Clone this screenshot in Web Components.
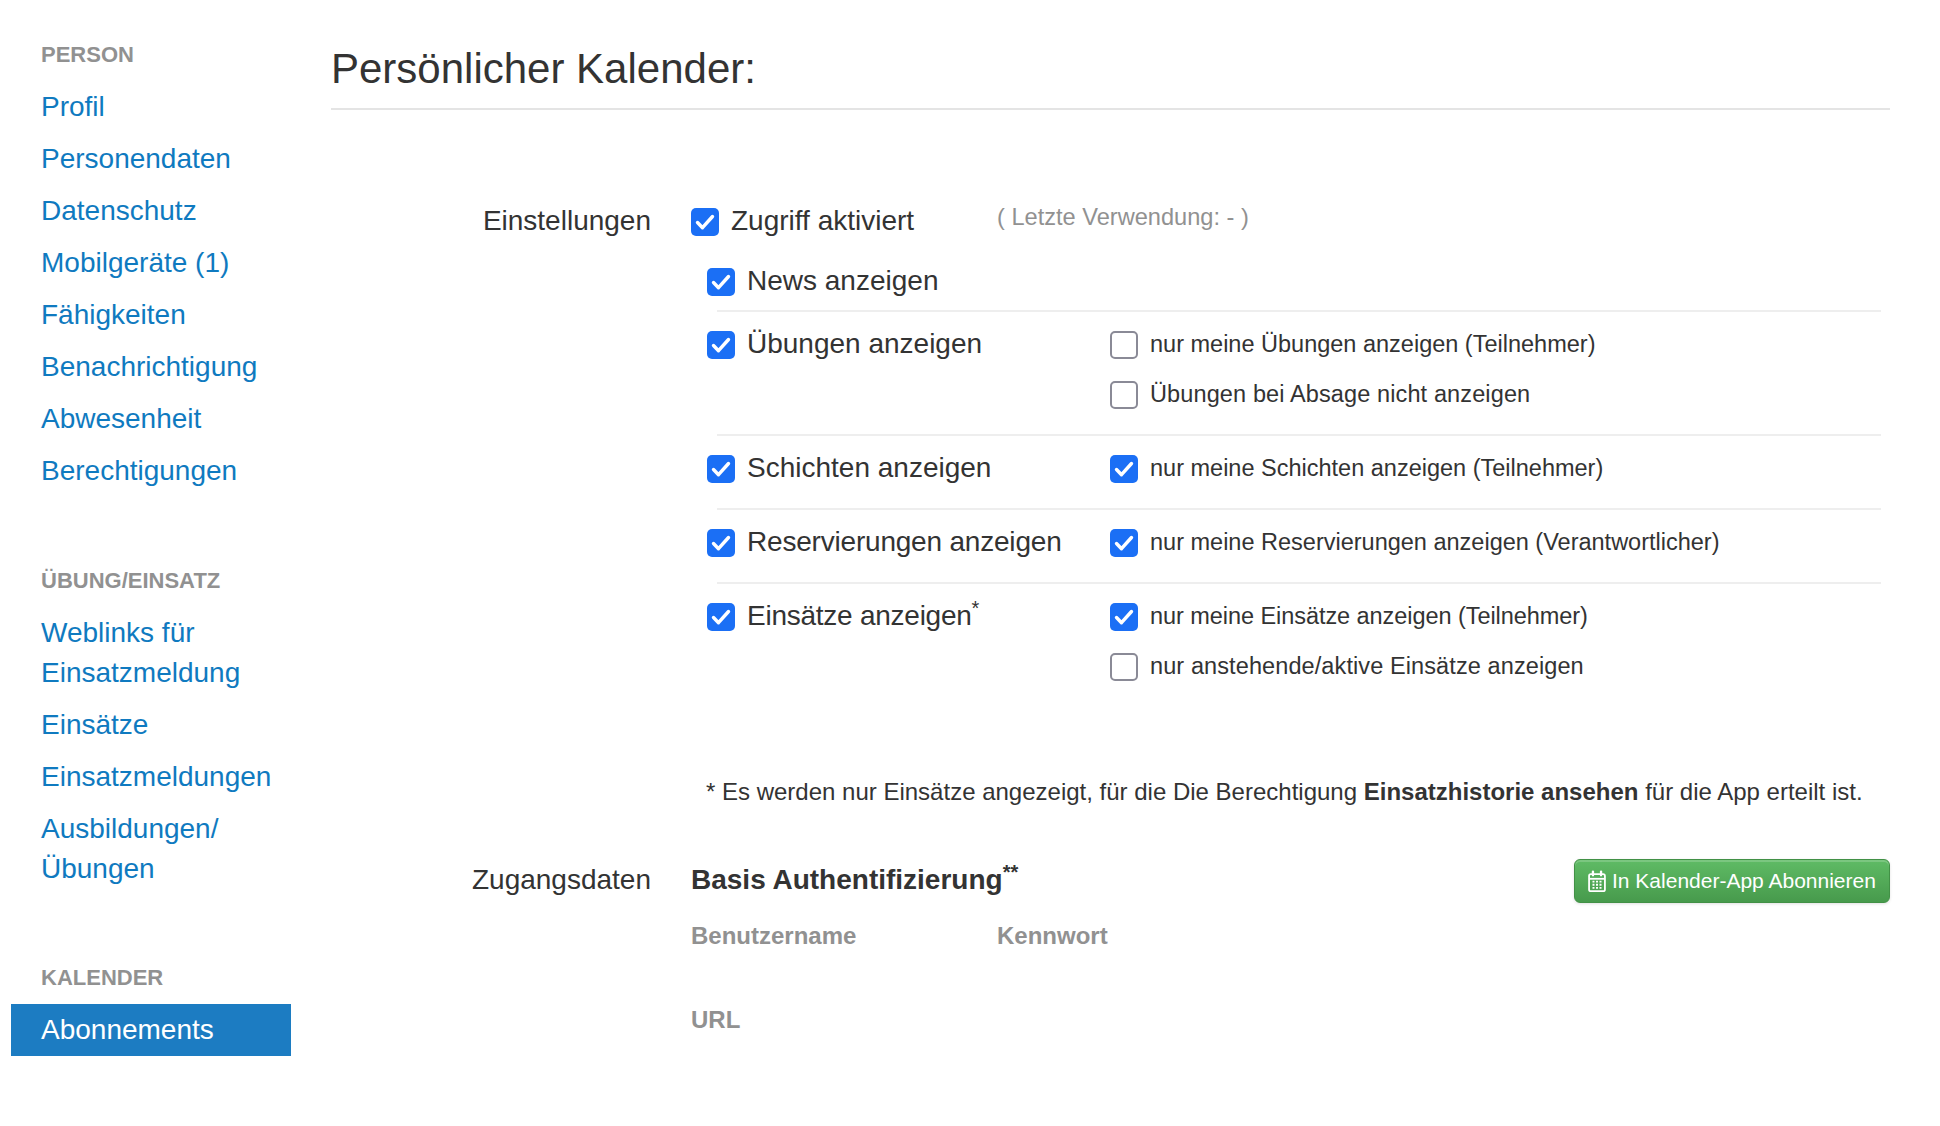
<!DOCTYPE html>
<html lang="de">
<head>
<meta charset="utf-8">
<title>Persönlicher Kalender</title>
<style>
    html, body{
        background: white;
        color: #333;
        font-family: "Liberation Sans", Arial, sans-serif;
        font-size: 28px;
        margin: 0;
    }
    sup{
        font-size: 20px;
        line-height: 0;
    }
</style>
</head>
<body>

<account-page>
    <nav-group slot="nav" title="PERSON">
        <nav-link>Profil</nav-link>
        <nav-link>Personendaten</nav-link>
        <nav-link>Datenschutz</nav-link>
        <nav-link>Mobilgeräte (1)</nav-link>
        <nav-link>Fähigkeiten</nav-link>
        <nav-link>Benachrichtigung</nav-link>
        <nav-link>Abwesenheit</nav-link>
        <nav-link>Berechtigungen</nav-link>
    </nav-group>
    <nav-group slot="nav" title="ÜBUNG/EINSATZ">
        <nav-link>Weblinks für Einsatzmeldung</nav-link>
        <nav-link>Einsätze</nav-link>
        <nav-link>Einsatzmeldungen</nav-link>
        <nav-link>Ausbildungen/ Übungen</nav-link>
    </nav-group>
    <nav-group slot="nav" title="KALENDER">
        <nav-link active>Abonnements</nav-link>
    </nav-group>

    <page-title>Persönlicher Kalender:</page-title>

    <form-row label="Einstellungen" class="settings">
        <access-line>
            <check-item checked>Zugriff aktiviert</check-item>
            <span slot="hint">( Letzte Verwendung: - )</span>
        </access-line>
        <option-row compact>
            <check-item checked>News anzeigen</check-item>
        </option-row>
        <option-row>
            <check-item checked>Übungen anzeigen</check-item>
            <check-item slot="options" small>nur meine Übungen anzeigen (Teilnehmer)</check-item>
            <check-item slot="options" small style="letter-spacing:.12px">Übungen bei Absage nicht anzeigen</check-item>
        </option-row>
        <option-row>
            <check-item checked>Schichten anzeigen</check-item>
            <check-item slot="options" small checked>nur meine Schichten anzeigen (Teilnehmer)</check-item>
        </option-row>
        <option-row>
            <check-item checked style="letter-spacing:-.2px">Reservierungen anzeigen</check-item>
            <check-item slot="options" small checked>nur meine Reservierungen anzeigen (Verantwortlicher)</check-item>
        </option-row>
        <option-row>
            <check-item checked style="letter-spacing:-.25px">Einsätze anzeigen<sup>*</sup></check-item>
            <check-item slot="options" small checked style="letter-spacing:-.06px">nur meine Einsätze anzeigen (Teilnehmer)</check-item>
            <check-item slot="options" small style="letter-spacing:.1px">nur anstehende/aktive Einsätze anzeigen</check-item>
        </option-row>
        <foot-note>* Es werden nur Einsätze angezeigt, für die Die Berechtigung <b>Einsatzhistorie ansehen</b> für die App erteilt ist.</foot-note>
    </form-row>

    <form-row label="Zugangsdaten">
        <access-data>
            <span slot="heading">Basis Authentifizierung<sup>**</sup></span>
            <cal-button slot="action">In Kalender-App Abonnieren</cal-button>
        </access-data>
    </form-row>
</account-page>

<script>
function makeTemplate(html){
    const t = document.createElement("template")
    t.innerHTML = html
    return t
}

class ShadowBase extends HTMLElement {
    constructor(){
        super()
        const shadow = this.attachShadow({ mode: "open" })
        shadow.append(this.constructor.template.content.cloneNode(true))
    }
}

class AccountPage extends ShadowBase {
    static template = makeTemplate(`
        <style>
            :host{ display: flex; min-height: 1126px; }
            aside{ flex: none; margin-left: 11px; padding-top: 40px; width: 280px; }
            main{ flex: 1; margin: 0 50px 0 40px; min-width: 0; }
        </style>
        <aside><slot name="nav"></slot></aside>
        <main><slot></slot></main>`)
}

class NavGroup extends ShadowBase {
    static template = makeTemplate(`
        <style>
            :host{ display: block; margin-bottom: 68.5px; }
            h4{
                color: #919191;
                font-size: 22px;
                font-weight: bold;
                line-height: 30px;
                margin: 0 0 11px;
                padding-left: 30px;
            }
        </style>
        <h4></h4>
        <slot></slot>`)
    connectedCallback(){
        this.shadowRoot.querySelector("h4").textContent = this.getAttribute("title")
        this.removeAttribute("title")
    }
}

class NavLink extends ShadowBase {
    static template = makeTemplate(`
        <style>
            :host{ display: block; }
            a{
                color: #0f7ac0;
                display: block;
                line-height: 40px;
                padding: 6px 30px;
                text-decoration: none;
            }
            :host([active]) a{ background: #1c7cc2; color: white; }
        </style>
        <a href="#"><slot></slot></a>`)
}

class PageTitle extends ShadowBase {
    static template = makeTemplate(`
        <style>
            :host{ display: block; border-bottom: 2px solid #e4e4e4; height: 108px; margin-bottom: 91px; }
            h1{ font-size: 42px; font-weight: normal; line-height: 50px; margin: 0; padding-top: 44px; }
        </style>
        <h1><slot></slot></h1>`)
}

class FormRow extends ShadowBase {
    static template = makeTemplate(`
        <style>
            :host{ display: grid; grid-template-columns: 320px 1fr; column-gap: 40px; }
            label{ line-height: 40px; text-align: right; }
        </style>
        <label></label>
        <div><slot></slot></div>`)
    connectedCallback(){
        this.shadowRoot.querySelector("label").textContent = this.getAttribute("label")
    }
}

class AccessLine extends ShadowBase {
    static template = makeTemplate(`
        <style>
            :host{ display: flex; margin-bottom: 6px; }
            ::slotted(check-item){ flex: none; width: 306px; }
            .hint{ color: #919191; font-size: 23.6px; line-height: 32px; }
        </style>
        <slot></slot>
        <div class="hint"><slot name="hint"></slot></div>`)
}

class OptionRow extends ShadowBase {
    static template = makeTemplate(`
        <style>
            :host{ display: block; margin: 0 9px 0 16px; }
            hr{ background: #eee; border: 0; height: 2px; margin: 0 0 0 10px; }
            .cols{ display: grid; grid-template-columns: 403px 1fr; padding: 12px 0 20px; }
            :host([compact]) .cols{ padding: 14px 0 9px; }
            .options{ display: flex; flex-direction: column; gap: 10px; }
            :host([compact]) hr{ display: none; }
        </style>
        <hr>
        <div class="cols">
            <div><slot></slot></div>
            <div class="options"><slot name="options"></slot></div>
        </div>`)
}

class CheckItem extends ShadowBase {
    static template = makeTemplate(`
        <style>
            :host{ display: flex; align-items: flex-start; line-height: 40px; white-space: nowrap; }
            :host([small]){ font-size: 23.5px; }
            .box{
                background: white;
                border: 2px solid #8a8a96;
                border-radius: 5px;
                box-sizing: border-box;
                flex: none;
                height: 28px;
                margin: 7px 12px 0 0;
                width: 28px;
            }
            svg{ display: none; }
            :host([checked]) .box{ background: #1b6ff5; border: 0; }
            :host([checked]) svg{ display: block; }
        </style>
        <span class="box">
            <svg width="28" height="28" viewBox="0 0 28 28">
                <path d="M6.5 14.5l5 5.2L21.5 8.5" fill="none" stroke="white" stroke-width="3.4" stroke-linecap="round" stroke-linejoin="round"/>
            </svg>
        </span>
        <span><slot></slot></span>`)
}

class FootNote extends ShadowBase {
    static template = makeTemplate(`
        <style>
            :host{ display: block; font-size: 24px; line-height: 40px; margin: 66px 0 48px 15px; white-space: nowrap; }
        </style>
        <slot></slot>`)
}

class AccessData extends ShadowBase {
    static template = makeTemplate(`
        <style>
            :host{ display: block; }
            .head{ display: flex; justify-content: space-between; align-items: center; height: 40px; }
            .title{ font-weight: bold; line-height: 40px; }
            .creds{ color: #919191; display: flex; font-size: 24px; font-weight: bold; line-height: 40px; margin-top: 16px; }
            .creds span:first-child{ width: 306px; }
            .url{ color: #919191; font-size: 24px; font-weight: bold; line-height: 40px; margin-top: 44px; }
            ::slotted(cal-button){ margin-top: 2px; }
        </style>
        <div class="head">
            <div class="title"><slot name="heading"></slot></div>
            <slot name="action"></slot>
        </div>
        <div class="creds"><span>Benutzername</span><span>Kennwort</span></div>
        <div class="url">URL</div>`)
}

class CalButton extends ShadowBase {
    static template = makeTemplate(`
        <style>
            :host{ display: inline-block; }
            button{
                align-items: center;
                background: linear-gradient(#5fbb65, #479a4c);
                border: 1px solid #429146;
                border-radius: 6px;
                box-shadow: inset 0 2px 0 rgba(255,255,255,.18), 0 1px 3px rgba(0,0,0,.12);
                box-sizing: border-box;
                color: white;
                display: flex;
                font: inherit;
                font-size: 21px;
                gap: 6px;
                height: 44px;
                padding: 0 13px;
                width: 316px;
            }
        </style>
        <button>
            <svg width="18" height="23" viewBox="0 0 20 24" fill="none">
                <rect x="1.2" y="3.8" width="17.6" height="19" rx="2" stroke="white" stroke-width="2"/>
                <path d="M1 9h18" stroke="white" stroke-width="2"/>
                <path d="M5.5 1v4M14.5 1v4" stroke="white" stroke-width="2.6" stroke-linecap="round"/>
                <path d="M5 12.2h2.2M8.9 12.2h2.2M12.8 12.2h2.2M5 15.6h2.2M8.9 15.6h2.2M12.8 15.6h2.2M5 19h2.2M8.9 19h2.2M12.8 19h2.2" stroke="white" stroke-width="2"/>
            </svg>
            <slot></slot>
        </button>`)
}

customElements.define("account-page", AccountPage)
customElements.define("nav-group", NavGroup)
customElements.define("nav-link", NavLink)
customElements.define("page-title", PageTitle)
customElements.define("form-row", FormRow)
customElements.define("access-line", AccessLine)
customElements.define("option-row", OptionRow)
customElements.define("check-item", CheckItem)
customElements.define("foot-note", FootNote)
customElements.define("access-data", AccessData)
customElements.define("cal-button", CalButton)
</script>
</body>
</html>
